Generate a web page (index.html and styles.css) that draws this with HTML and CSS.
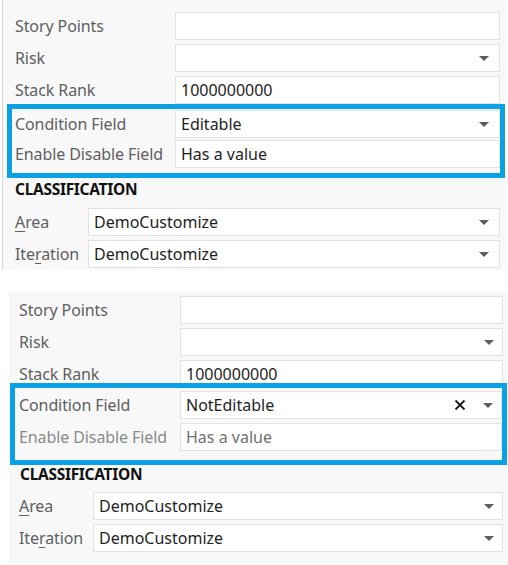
FILE: index.html
```html
<!DOCTYPE html>
<html>
<head>
<meta charset="utf-8">
<link rel="stylesheet" href="styles.css">
</head>
<body>
<section class="panel p1">
  <div class="row"><span class="label">Story Points</span><div class="input"></div></div>
  <div class="row"><span class="label">Risk</span><div class="input"><span class="val"></span><span class="caret"></span></div></div>
  <div class="row"><span class="label">Stack Rank</span><div class="input"><span class="val">1000000000</span></div></div>
  <div class="highlight">
    <div class="row"><span class="label">Condition Field</span><div class="input"><span class="val">Editable</span><span class="caret"></span></div></div>
    <div class="row"><span class="label">Enable Disable Field</span><div class="input"><span class="val">Has a value</span></div></div>
  </div>
  <h3 class="heading">CLASSIFICATION</h3>
  <div class="row area"><span class="label"><u>A</u>rea</span><div class="input"><span class="val">DemoCustomize</span><span class="caret"></span></div></div>
  <div class="row"><span class="label short">Ite<u>r</u>ation</span><div class="input"><span class="val">DemoCustomize</span><span class="caret"></span></div></div>
</section>

<section class="panel p2">
  <div class="row"><span class="label">Story Points</span><div class="input"></div></div>
  <div class="row"><span class="label">Risk</span><div class="input"><span class="val"></span><span class="caret"></span></div></div>
  <div class="row"><span class="label">Stack Rank</span><div class="input"><span class="val">1000000000</span></div></div>
  <div class="highlight">
    <div class="row"><span class="label">Condition Field</span><div class="input"><span class="val">NotEditable</span><span class="clear"><svg width="12" height="12" viewBox="0 0 12 12"><path d="M1.5 1.5 L10.5 10.5 M10.5 1.5 L1.5 10.5" stroke="#1a1a1a" stroke-width="1.8" fill="none"/></svg></span><span class="caret"></span></div></div>
    <div class="row disabled"><span class="label">Enable Disable Field</span><div class="input"><span class="val">Has a value</span></div></div>
  </div>
  <h3 class="heading">CLASSIFICATION</h3>
  <div class="row area"><span class="label"><u>A</u>rea</span><div class="input"><span class="val">DemoCustomize</span><span class="caret"></span></div></div>
  <div class="row"><span class="label short">Ite<u>r</u>ation</span><div class="input"><span class="val">DemoCustomize</span><span class="caret"></span></div></div>
</section>
</body>
</html>
```

FILE: styles.css
```css
* { box-sizing: border-box; }
html, body {
  margin: 0;
  padding: 0;
  background: #ffffff;
  width: 508px;
  height: 565px;
  overflow: hidden;
  font-family: "Noto Sans", "Open Sans", sans-serif;
  font-size: 16px;
  color: #222;
}
.panel {
  background: #f8f8f8;
  display: flex;
  flex-direction: column;
}
.p1 {
  margin-left: 2px;
  width: 503px;
  height: 270px;
  border-left: 1px solid #d6d6d6;
  padding: 12px 5px 2px 12px;
}
.p2 {
  margin-top: 22px;
  margin-left: 9px;
  width: 499px;
  height: 273px;
  padding: 4px 5px 0 10px;
}
.row {
  display: flex;
  align-items: center;
  height: 28px;
  margin-bottom: 4px;
  flex: none;
}
.label {
  width: 160px;
  flex: none;
  color: #5f5f5f;
  white-space: nowrap;
  letter-spacing: -0.1px;
}
.p2 .label { width: 161px; }
.label u { text-decoration-thickness: 1px; text-underline-offset: 3px; }
.area .label, .row .label.short { width: 73px; }
.p2 .area .label, .p2 .row .label.short { width: 74px; }
.input {
  flex: 1;
  height: 100%;
  background: #fff;
  border: 1px solid #e2e2e2;
  display: flex;
  align-items: center;
  padding: 0 10px 0 5px;
  color: #1e1e1e;
  white-space: nowrap;
}
.p2 .input { padding-right: 8px; }
.val { flex: 1; }
.caret {
  width: 0;
  height: 0;
  border-left: 5px solid transparent;
  border-right: 5px solid transparent;
  border-top: 5px solid #5e5e5e;
  flex: none;
}
.clear {
  display: flex;
  margin-right: 17px;
}
.highlight {
  border: 5px solid #0aa2e4;
  flex: none;
}
.p1 .highlight {
  margin: -4px -5px 0 -8px;
  padding: 1px 0 5px 3px;
}
.p1 .highlight .row:first-child { margin-bottom: 2px; }
.p1 .highlight .row:last-child { margin-bottom: 0; }
.p2 .highlight {
  margin: -9px -4px 0 -9px;
  padding: 3px 0 9px 4px;
}
.p2 .highlight .row:last-child { margin-bottom: 0; }
.disabled .label { color: #8a8a8a; }
.disabled .input { color: #707070; }
.heading {
  margin: 1px 0 9px 0;
  height: 20px;
  line-height: 20px;
  font-size: 15.5px;
  font-weight: 700;
  color: #111;
  letter-spacing: -0.3px;
  flex: none;
}
.p2 .heading {
  margin: 0 0 9px 1px;
  height: 18px;
  line-height: 18px;
}
```
